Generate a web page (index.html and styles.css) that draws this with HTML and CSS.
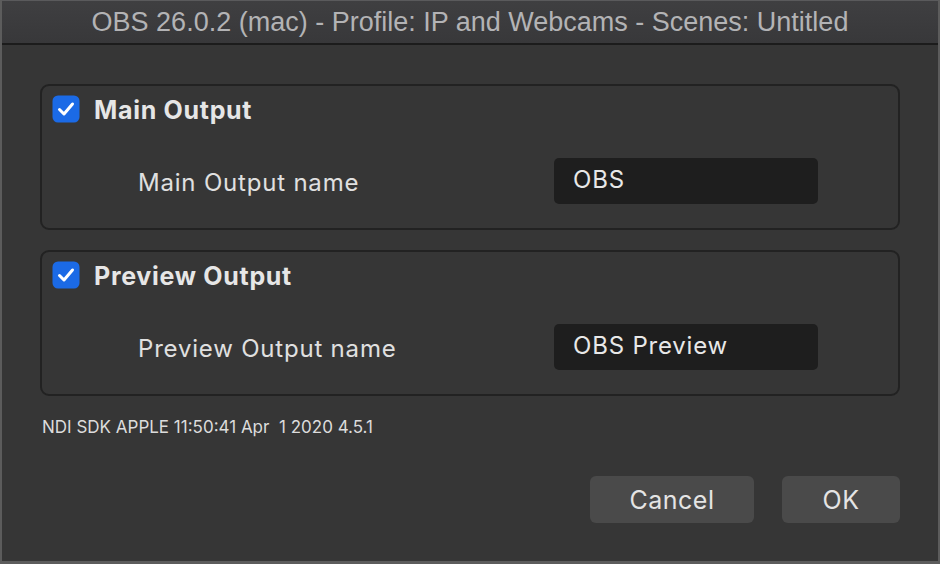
FILE: index.html
```html
<!DOCTYPE html>
<html>
<head>
<meta charset="utf-8">
<link rel="stylesheet" href="styles.css">
</head>
<body>
<div class="window">
  <div class="titlebar">OBS 26.0.2 (mac) - Profile: IP and Webcams - Scenes: Untitled</div>
  <div class="content">
    <div class="group">
      <div class="group-head">
        <svg class="check" width="28" height="28" viewBox="0 0 28 28"><rect x="0.5" y="0.5" width="27" height="27" rx="5.5" fill="#1b6ae6"/><path d="M7.5 14.5 L12 19 L20.5 9" fill="none" stroke="#fff" stroke-width="3" stroke-linecap="round" stroke-linejoin="round"/></svg>
        <span class="group-title">Main Output</span>
      </div>
      <div class="row">
        <span class="label">Main Output name</span>
        <div class="input">OBS</div>
      </div>
    </div>
    <div class="group">
      <div class="group-head">
        <svg class="check" width="28" height="28" viewBox="0 0 28 28"><rect x="0.5" y="0.5" width="27" height="27" rx="5.5" fill="#1b6ae6"/><path d="M7.5 14.5 L12 19 L20.5 9" fill="none" stroke="#fff" stroke-width="3" stroke-linecap="round" stroke-linejoin="round"/></svg>
        <span class="group-title">Preview Output</span>
      </div>
      <div class="row">
        <span class="label">Preview Output name</span>
        <div class="input">OBS Preview</div>
      </div>
    </div>
    <div class="sdk">NDI SDK APPLE 11:50:41 Apr&nbsp;&nbsp;1 2020 4.5.1</div>
    <div class="buttons">
      <div class="btn cancel">Cancel</div>
      <div class="btn ok">OK</div>
    </div>
  </div>
</div>
</body>
</html>
```
FILE: styles.css
```css
html, body {
  margin: 0;
  padding: 0;
  background: #363636;
}
.window {
  width: 940px;
  height: 564px;
  box-sizing: border-box;
  background: #363636;
  border-left: 2px solid #5c5c5c;
  border-right: 2px solid #5c5c5c;
  border-bottom: 3px solid #5c5c5c;
  font-family: Inter, "Liberation Sans", sans-serif;
  color: #e2e2e2;
  display: flex;
  flex-direction: column;
  overflow: hidden;
}
.titlebar {
  margin: 0 -2px;
  height: 42px;
  border-top: 1px solid #5a5a5c;
  border-bottom: 2px solid #1c1c1c;
  background: linear-gradient(#3f3f41, #38383a);
  color: #b3b3b5;
  font-family: "Liberation Sans", sans-serif;
  font-size: 27px;
  line-height: 42px;
  text-align: center;
  box-sizing: content-box;
  flex: none;
}
.content {
  padding: 39px 38px 0 38px;
  display: flex;
  flex-direction: column;
}
.group {
  height: 146px;
  box-sizing: border-box;
  border: 2px solid #222222;
  border-radius: 9px;
  padding: 8px 10px 0 10px;
  margin-bottom: 20px;
}
.group-head {
  display: flex;
  align-items: center;
  height: 30px;
}
.check {
  display: block;
  flex: none;
}
.group-title {
  margin-left: 14px;
  font-size: 25px;
  letter-spacing: 0.7px;
  font-weight: 700;
  color: #e6e6e6;
  line-height: 30px;
  padding-top: 2px;
}
.row {
  display: flex;
  align-items: center;
  margin-top: 34px;
  padding-left: 86px;
}
.label {
  font-size: 24px;
  letter-spacing: 0.8px;
  color: #e0e0e0;
  width: 416px;
  padding-top: 2px;
}
.input {
  width: 264px;
  height: 46px;
  box-sizing: border-box;
  background: #1e1e1e;
  border-radius: 5px;
  padding-left: 19px;
  font-size: 24px;
  letter-spacing: 0.8px;
  line-height: 44px;
  color: #e8e8e8;
}
.sdk {
  margin-top: 1px;
  padding-left: 2px;
  font-size: 17px;
  line-height: 21px;
  color: #dcdcdc;
}
.buttons {
  display: flex;
  justify-content: flex-end;
  gap: 28px;
  margin-top: 38px;
}
.btn {
  height: 47px;
  background: #4a4a4a;
  border-radius: 6px;
  font-size: 25px;
  letter-spacing: 0.5px;
  line-height: 49px;
  text-align: center;
  color: #e4e4e4;
}
.cancel { width: 164px; }
.ok { width: 118px; }
```
